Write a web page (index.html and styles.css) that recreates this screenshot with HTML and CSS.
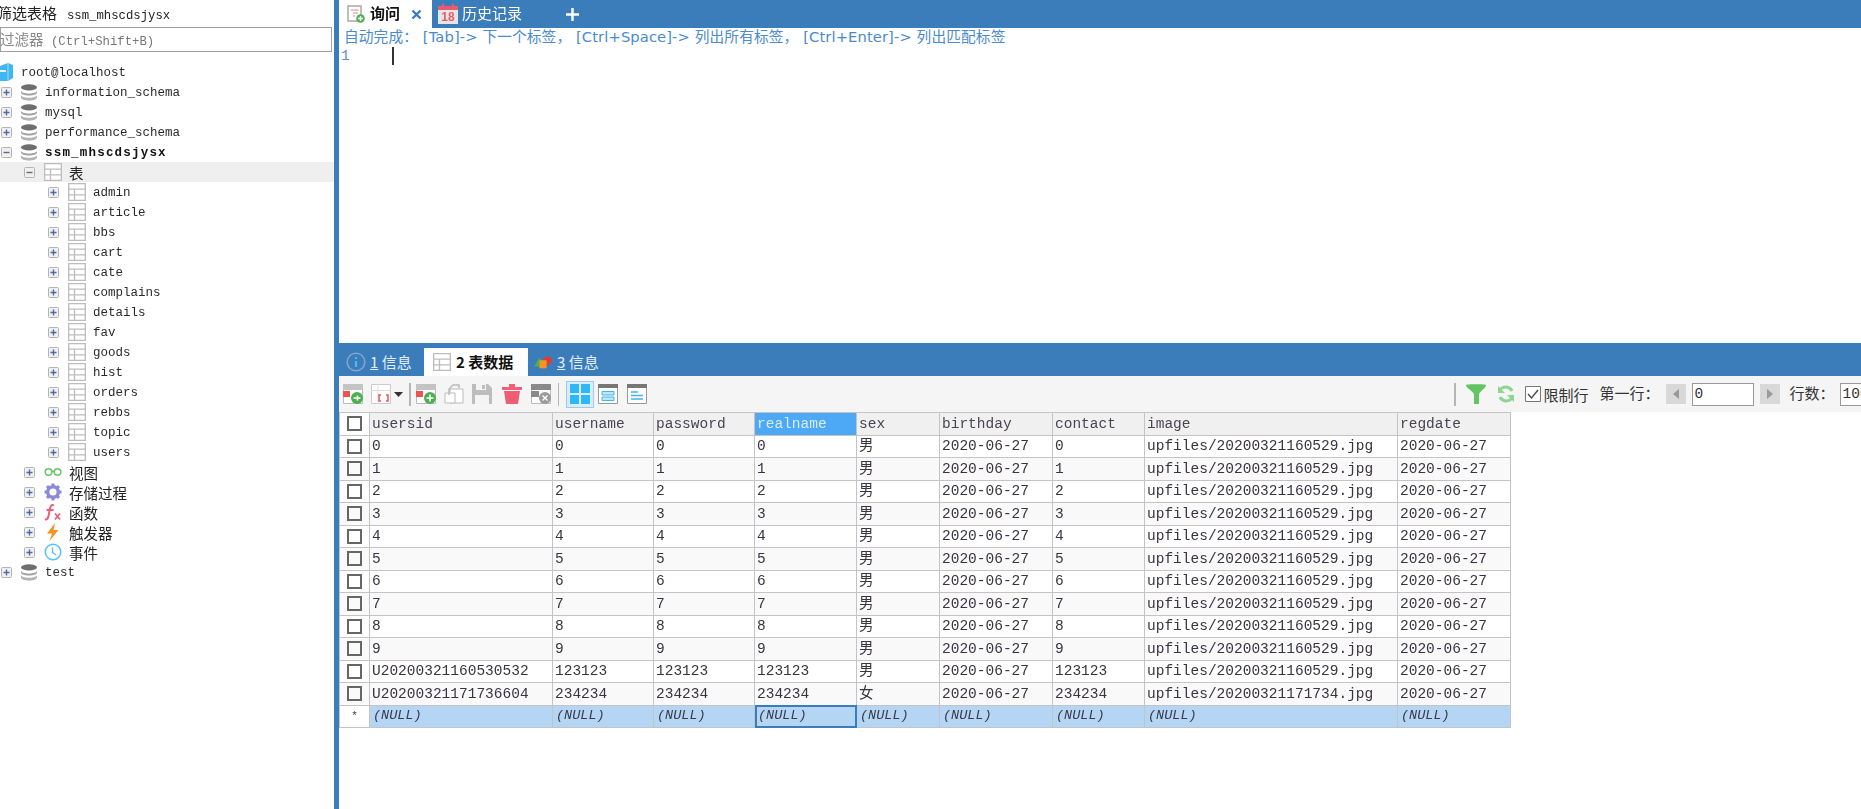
FILE: index.html
```html
<!DOCTYPE html>
<html lang="zh">
<head>
<meta charset="utf-8">
<title>SQLyog</title>
<link rel="stylesheet" href="styles.css">
</head>
<body>
<svg class="defs" width="0" height="0" aria-hidden="true">
  <symbol id="i-plus" viewBox="0 0 11 11"><rect x=".5" y=".5" width="10" height="10" rx="1" fill="#f0f0f0" stroke="#b4b4b4"/><path d="M2.5 5.5h6M5.5 2.5v6" stroke="#4a6aa8" stroke-width="1.4"/></symbol>
  <symbol id="i-minus" viewBox="0 0 11 11"><rect x=".5" y=".5" width="10" height="10" rx="1" fill="#f0f0f0" stroke="#b4b4b4"/><path d="M2.5 5.5h6" stroke="#5a6a88" stroke-width="1.4"/></symbol>
  <symbol id="i-db" viewBox="0 0 16 20" preserveAspectRatio="none"><ellipse cx="8" cy="4" rx="8" ry="3.6" fill="#6e6e6e"/><path d="M0 7.5c0 2 3.600 3.600 8 3.600s8-1.600 8-3.600v2.500c0 2-3.600 3.600-8 3.600s-8-1.600-8-3.600z" fill="#a2a2a2"/><path d="M0 12.500c0 2 3.600 3.600 8 3.600s8-1.600 8-3.600v3.500c0 2-3.600 3.600-8 3.600s-8-1.600-8-3.600z" fill="#b4b4b4"/></symbol>
  <symbol id="i-table" viewBox="0 0 18 18"><path d="M.7.7h16.600v16.600H.7zM.7 6.200h16.600M.7 11.800h16.600M6.500 6.200v11" fill="#fff" stroke="#bdbdbd" stroke-width="1.300"/></symbol>
</svg>

<aside class="sidebar">
  <div class="filter-title"><span class="cjk">筛选表格</span> ssm_mhscdsjysx</div>
  <div class="filter-input"><span class="cjk">过滤器</span> (Ctrl+Shift+B)</div>
  <div class="tree">
    <div class="row root">
      <svg class="icon-root" viewBox="0 0 13 18"><path d="M0 3l8-3 5 2v13l-5 3H0z" fill="#3fb6f2"/><path d="M8 0v18" stroke="#9adcfb" stroke-width="1"/><path d="M0 7h6v2H0z" fill="#e4f5fe"/></svg>
      <span>root@localhost</span>
    </div>
    <div class="row l0"><svg class="exp"><use href="#i-plus"/></svg><svg class="icon-db"><use href="#i-db"/></svg><span>information_schema</span></div>
    <div class="row l0"><svg class="exp"><use href="#i-plus"/></svg><svg class="icon-db"><use href="#i-db"/></svg><span>mysql</span></div>
    <div class="row l0"><svg class="exp"><use href="#i-plus"/></svg><svg class="icon-db"><use href="#i-db"/></svg><span>performance_schema</span></div>
    <div class="row l0 strong"><svg class="exp"><use href="#i-minus"/></svg><svg class="icon-db"><use href="#i-db"/></svg><span>ssm_mhscdsjysx</span></div>
    <div class="row l1 current"><svg class="exp"><use href="#i-minus"/></svg><svg class="icon-t"><use href="#i-table"/></svg><span class="cjk">表</span></div>
    <div class="row l2"><svg class="exp"><use href="#i-plus"/></svg><svg class="icon-t"><use href="#i-table"/></svg><span>admin</span></div>
    <div class="row l2"><svg class="exp"><use href="#i-plus"/></svg><svg class="icon-t"><use href="#i-table"/></svg><span>article</span></div>
    <div class="row l2"><svg class="exp"><use href="#i-plus"/></svg><svg class="icon-t"><use href="#i-table"/></svg><span>bbs</span></div>
    <div class="row l2"><svg class="exp"><use href="#i-plus"/></svg><svg class="icon-t"><use href="#i-table"/></svg><span>cart</span></div>
    <div class="row l2"><svg class="exp"><use href="#i-plus"/></svg><svg class="icon-t"><use href="#i-table"/></svg><span>cate</span></div>
    <div class="row l2"><svg class="exp"><use href="#i-plus"/></svg><svg class="icon-t"><use href="#i-table"/></svg><span>complains</span></div>
    <div class="row l2"><svg class="exp"><use href="#i-plus"/></svg><svg class="icon-t"><use href="#i-table"/></svg><span>details</span></div>
    <div class="row l2"><svg class="exp"><use href="#i-plus"/></svg><svg class="icon-t"><use href="#i-table"/></svg><span>fav</span></div>
    <div class="row l2"><svg class="exp"><use href="#i-plus"/></svg><svg class="icon-t"><use href="#i-table"/></svg><span>goods</span></div>
    <div class="row l2"><svg class="exp"><use href="#i-plus"/></svg><svg class="icon-t"><use href="#i-table"/></svg><span>hist</span></div>
    <div class="row l2"><svg class="exp"><use href="#i-plus"/></svg><svg class="icon-t"><use href="#i-table"/></svg><span>orders</span></div>
    <div class="row l2"><svg class="exp"><use href="#i-plus"/></svg><svg class="icon-t"><use href="#i-table"/></svg><span>rebbs</span></div>
    <div class="row l2"><svg class="exp"><use href="#i-plus"/></svg><svg class="icon-t"><use href="#i-table"/></svg><span>topic</span></div>
    <div class="row l2"><svg class="exp"><use href="#i-plus"/></svg><svg class="icon-t"><use href="#i-table"/></svg><span>users</span></div>
    <div class="row l1"><svg class="exp"><use href="#i-plus"/></svg>
      <svg class="icon-t" viewBox="0 0 18 18"><circle cx="4.500" cy="9" r="3.300" fill="none" stroke="#6cc76c" stroke-width="1.600"/><circle cx="13.500" cy="9" r="3.300" fill="none" stroke="#6cc76c" stroke-width="1.600"/><path d="M7.500 8.300h3" stroke="#6cc76c" stroke-width="1.600"/></svg>
      <span class="cjk">视图</span></div>
    <div class="row l1"><svg class="exp"><use href="#i-plus"/></svg>
      <svg class="icon-t" viewBox="0 0 18 18"><circle cx="9" cy="9" r="5.300" fill="none" stroke="#8a8ad8" stroke-width="3.400"/><path d="M9 .5v3M9 14.500v3M.5 9h3M14.500 9h3M3 3l2.200 2.200M12.800 12.800L15 15M15 3l-2.200 2.200M5.200 12.800L3 15" stroke="#8a8ad8" stroke-width="3"/></svg>
      <span class="cjk">存储过程</span></div>
    <div class="row l1"><svg class="exp"><use href="#i-plus"/></svg>
      <svg class="icon-t" viewBox="0 0 18 18"><path d="M10 2.500C7.500 1 6.500 3 6 5.500L4.500 13c-.5 2.500-1.500 3.800-3.500 3.500M2.500 7h7" fill="none" stroke="#e8607a" stroke-width="2"/><path d="M11 10.500l5 6M16 10.500l-5 6" stroke="#e8607a" stroke-width="1.800"/></svg>
      <span class="cjk">函数</span></div>
    <div class="row l1"><svg class="exp"><use href="#i-plus"/></svg>
      <svg class="icon-t" viewBox="0 0 18 18"><path d="M11 0L3 10.500h5L5.500 18 14.500 7H9.500z" fill="#f7931e"/></svg>
      <span class="cjk">触发器</span></div>
    <div class="row l1"><svg class="exp"><use href="#i-plus"/></svg>
      <svg class="icon-t" viewBox="0 0 18 18"><circle cx="9" cy="9" r="7.800" fill="none" stroke="#56c3f5" stroke-width="1.500"/><path d="M8.500 4.500v5l3.500 2.500" fill="none" stroke="#56c3f5" stroke-width="1.400"/></svg>
      <span class="cjk">事件</span></div>
    <div class="row l0"><svg class="exp"><use href="#i-plus"/></svg><svg class="icon-db"><use href="#i-db"/></svg><span>test</span></div>
  </div>
</aside>

<main class="main">
  <nav class="tabbar top">
    <div class="tab active query">
      <svg class="tab-icon" viewBox="0 0 18 18"><path d="M1 1h13v15H1z" fill="#fff" stroke="#a8a8a8" stroke-width="1.500"/><path d="M3.500 5h8M6 8h5M6 11h2" stroke="#d98a8a"/><circle cx="13.500" cy="13.500" r="4.300" fill="#4caf50"/><path d="M11 13.500h5M13.500 11v5" stroke="#fff" stroke-width="1.400"/></svg>
      <span>询问</span>
      <svg class="close" viewBox="0 0 11 11"><path d="M1.500 1.500l8 8M9.500 1.500l-8 8" stroke="#3b7dba" stroke-width="2.400"/></svg>
    </div>
    <div class="tab history">
      <svg class="tab-icon cal" viewBox="0 0 20 20"><path d="M0 3h20v17H0z" fill="#e6e6e6"/><path d="M0 2h20v4H0z" fill="#e85a6c"/><path d="M4 0h2v4H4zM14 0h2v4h-2z" fill="#e85a6c"/><text x="10" y="17" class="cal-num">18</text></svg>
      <span>历史记录</span>
    </div>
    <svg class="add" viewBox="0 0 13 13"><path d="M6.500 0v13M0 6.500h13" stroke="#fff" stroke-width="2.400"/></svg>
  </nav>

  <section class="editor">
    <div class="hint">自动完成： [Tab]-&gt; 下一个标签， [Ctrl+Space]-&gt; 列出所有标签， [Ctrl+Enter]-&gt; 列出匹配标签</div>
    <div class="code-line"><span class="gutter">1</span><span class="caret"></span></div>
  </section>

  <nav class="tabbar bottom">
    <div class="rtab">
      <svg class="rtab-icon" viewBox="0 0 20 20"><circle cx="10" cy="10" r="8.800" fill="none" stroke="#7da7cc" stroke-width="1.600"/><path d="M10 5v2M10 9v6" stroke="#4fb6ee" stroke-width="2.200"/></svg>
      <span><u>1</u> 信息</span>
    </div>
    <div class="rtab active">
      <svg class="rtab-icon"><use href="#i-table"/></svg>
      <span>2 表数据</span>
    </div>
    <div class="rtab third">
      <svg class="rtab-icon" viewBox="0 0 20 20"><path d="M0 15L6 5l5 10z" fill="#4caf50"/><circle cx="15" cy="8.500" r="4.500" fill="#e53935"/><path d="M6 8h8v9H6z" fill="#f7931e"/></svg>
      <span><u>3</u> 信息</span>
    </div>
  </nav>

  <div class="toolbar">
    <div class="tools-left">
      <svg class="tool" viewBox="0 0 20 20"><path d="M.5.5h19v19H.5z" fill="#fff" stroke="#bbb"/><path d="M0 7h7v6H0z" fill="#ef5350"/><path d="M0 0h20v6H0z" fill="#c4c4c4"/><circle cx="14" cy="14" r="6" fill="#4caf50"/><path d="M10.500 14h7M14.500 11.500v5" stroke="#fff" stroke-width="1.600"/></svg>
      <svg class="tool gap6" viewBox="0 0 20 20"><path d="M.5.500h19v19H.5z" fill="#fff" stroke="#ccc"/><path d="M0 6.500h20M7 0v20" stroke="#ddd"/><path d="M11 11H9v6h2M16 11h2v6h-2" fill="none" stroke="#ef5350" stroke-width="1.500" transform="translate(-1 0)"/></svg>
      <svg class="caret-down" viewBox="0 0 9 5"><path d="M0 0h9L4.500 5z" fill="#333"/></svg>
      <span class="tsep first"></span>
      <svg class="tool" viewBox="0 0 20 20"><path d="M.5.500h19v19H.5z" fill="#fff" stroke="#bbb"/><path d="M0 7h7v6H0z" fill="#ef5350"/><path d="M0 0h20v6H0z" fill="#c4c4c4"/><circle cx="14" cy="14" r="6" fill="#4caf50"/><path d="M10.500 14h7M14 10.500v7" stroke="#fff" stroke-width="1.600"/></svg>
      <svg class="tool gap8" viewBox="0 0 20 20"><path d="M6 5h13v14H6z" fill="#fff" stroke="#bbb"/><path d="M1 9h10v10H1z" fill="#fff" stroke="#bbb"/><path d="M5 11V5l4-4h6v3" fill="none" stroke="#bbb" stroke-width="1.500"/></svg>
      <svg class="tool gap8" viewBox="0 0 20 20"><path d="M0 0h16l4 4v16H0z" fill="#bdbdbd"/><path d="M4 0h10v6H4zM3 11h14v9H3z" fill="#f4f4f4"/><path d="M10 1h3v4h-3z" fill="#bdbdbd"/></svg>
      <svg class="tool gap10" viewBox="0 0 20 20"><path d="M0 3h20v3H0zM7 0h6v3H7zM2 7h16l-2 13H4z" fill="#ee5f75"/></svg>
      <svg class="tool gap9" viewBox="0 0 20 20"><path d="M.5.500h19v19H.5z" fill="#fff" stroke="#bbb"/><path d="M0 0h20v6H0zM0 7h8v6H0z" fill="#8a8a8a"/><circle cx="14" cy="14" r="6" fill="#9a9a9a"/><path d="M11.500 11.500l5 5M16.500 11.500l-5 5" stroke="#fff" stroke-width="1.400"/></svg>
      <span class="tsep second"></span>
      <span class="view-on"><svg class="tool" viewBox="0 0 20 20"><path d="M0 0h9v9H0zM11 0h9v9h-9zM0 11h9v9H0zM11 11h9v9h-9z" fill="#2eb8f6"/></svg></span>
      <svg class="tool gap4" viewBox="0 0 20 20"><path d="M.5.500h19v19H.5z" fill="#fff" stroke="#999"/><path d="M0 0h20v4H0z" fill="#777"/><path d="M4 7.500h12v3.500H4zM4 13h12v3.500H4z" fill="#bfe6fb" stroke="#45b4ee"/></svg>
      <svg class="tool gap9" viewBox="0 0 20 20"><path d="M.5.500h19v19H.5z" fill="#fff" stroke="#999"/><path d="M0 0h20v4H0z" fill="#777"/><path d="M4 8h7M4 11.500h12M4 15h12" stroke="#45b4ee" stroke-width="1.300"/></svg>
    </div>
    <div class="tools-right">
      <span class="tsep"></span>
      <svg class="tool filter" viewBox="0 0 20 20"><path d="M0 1c0-1 20-1 20 0 0 3-6 6-7 9v10H8V10C7 7 0 4 0 1z" fill="#62c462"/></svg>
      <svg class="tool refresh" viewBox="0 0 18 18"><path d="M15 6A7 7 0 0 0 3 5M3 12a7 7 0 0 0 12 1" fill="none" stroke="#8fd48f" stroke-width="3"/><path d="M1 1v7h7zM17 17v-7h-7z" fill="#8fd48f"/></svg>
      <span class="check"><svg viewBox="0 0 16 16"><path d="M.5.500h15v15H.5z" fill="#fff" stroke="#777"/><path d="M3 8l3.500 4L13 4" fill="none" stroke="#444" stroke-width="1.300"/></svg></span>
      <span class="tlabel limit">限制行</span>
      <span class="tlabel first-row">第一行：</span>
      <span class="pager"><svg viewBox="0 0 8 12"><path d="M7 1v10L1 6z" fill="#999"/></svg></span>
      <span class="num-input wide">0</span>
      <span class="pager"><svg viewBox="0 0 8 12"><path d="M1 1v10l6-5z" fill="#999"/></svg></span>
      <span class="tlabel rows">行数：</span>
      <span class="num-input">1000</span>
    </div>
  </div>

  <div class="grid-wrap">
    <table class="grid">
      <colgroup><col class="c0"><col class="c1"><col class="c2"><col class="c3"><col class="c4"><col class="c5"><col class="c6"><col class="c7"><col class="c8"><col class="c9"></colgroup>
      <thead><tr><th class="mark"><span class="box"></span></th><th>usersid</th><th>username</th><th>password</th><th class="sel-col">realname</th><th>sex</th><th>birthday</th><th>contact</th><th>image</th><th>regdate</th></tr></thead>
      <tbody>
        <tr><td class="mark"><span class="box"></span></td><td>0</td><td>0</td><td>0</td><td>0</td><td>男</td><td>2020-06-27</td><td>0</td><td>upfiles/20200321160529.jpg</td><td>2020-06-27</td></tr>
        <tr><td class="mark"><span class="box"></span></td><td>1</td><td>1</td><td>1</td><td>1</td><td>男</td><td>2020-06-27</td><td>1</td><td>upfiles/20200321160529.jpg</td><td>2020-06-27</td></tr>
        <tr><td class="mark"><span class="box"></span></td><td>2</td><td>2</td><td>2</td><td>2</td><td>男</td><td>2020-06-27</td><td>2</td><td>upfiles/20200321160529.jpg</td><td>2020-06-27</td></tr>
        <tr><td class="mark"><span class="box"></span></td><td>3</td><td>3</td><td>3</td><td>3</td><td>男</td><td>2020-06-27</td><td>3</td><td>upfiles/20200321160529.jpg</td><td>2020-06-27</td></tr>
        <tr><td class="mark"><span class="box"></span></td><td>4</td><td>4</td><td>4</td><td>4</td><td>男</td><td>2020-06-27</td><td>4</td><td>upfiles/20200321160529.jpg</td><td>2020-06-27</td></tr>
        <tr><td class="mark"><span class="box"></span></td><td>5</td><td>5</td><td>5</td><td>5</td><td>男</td><td>2020-06-27</td><td>5</td><td>upfiles/20200321160529.jpg</td><td>2020-06-27</td></tr>
        <tr><td class="mark"><span class="box"></span></td><td>6</td><td>6</td><td>6</td><td>6</td><td>男</td><td>2020-06-27</td><td>6</td><td>upfiles/20200321160529.jpg</td><td>2020-06-27</td></tr>
        <tr><td class="mark"><span class="box"></span></td><td>7</td><td>7</td><td>7</td><td>7</td><td>男</td><td>2020-06-27</td><td>7</td><td>upfiles/20200321160529.jpg</td><td>2020-06-27</td></tr>
        <tr><td class="mark"><span class="box"></span></td><td>8</td><td>8</td><td>8</td><td>8</td><td>男</td><td>2020-06-27</td><td>8</td><td>upfiles/20200321160529.jpg</td><td>2020-06-27</td></tr>
        <tr><td class="mark"><span class="box"></span></td><td>9</td><td>9</td><td>9</td><td>9</td><td>男</td><td>2020-06-27</td><td>9</td><td>upfiles/20200321160529.jpg</td><td>2020-06-27</td></tr>
        <tr><td class="mark"><span class="box"></span></td><td>U20200321160530532</td><td>123123</td><td>123123</td><td>123123</td><td>男</td><td>2020-06-27</td><td>123123</td><td>upfiles/20200321160529.jpg</td><td>2020-06-27</td></tr>
        <tr><td class="mark"><span class="box"></span></td><td>U20200321171736604</td><td>234234</td><td>234234</td><td>234234</td><td>女</td><td>2020-06-27</td><td>234234</td><td>upfiles/20200321171734.jpg</td><td>2020-06-27</td></tr>
        <tr class="new-row"><td class="mark star">*</td><td>(NULL)</td><td>(NULL)</td><td>(NULL)</td><td class="focus">(NULL)</td><td>(NULL)</td><td>(NULL)</td><td>(NULL)</td><td>(NULL)</td><td>(NULL)</td></tr>
      </tbody>
    </table>
  </div>
</main>
</body>
</html>
```

FILE: styles.css
```css
* { box-sizing: border-box; }
html, body { margin: 0; height: 100%; }
body {
  display: flex;
  width: 1861px;
  height: 809px;
  overflow: hidden;
  background: #fff;
  color: #222;
  font-family: "Liberation Mono", "Noto Sans CJK SC", monospace;
  filter: blur(.35px);
}
.defs { position: absolute; }
.cjk { font-family: "Noto Sans CJK SC", sans-serif; }

/* Sidebar */
.sidebar {
  flex: 0 0 334px;
  width: 334px;
  overflow: hidden;
  font-size: 12.3px;
}
.filter-title {
  height: 27px;
  line-height: 26px;
  white-space: nowrap;
  color: #222;
}
.filter-title .cjk { font-size: 15px; margin: 0 2.500px 0 -3px; }
.filter-input {
  height: 25px;
  width: 332px;
  margin-bottom: 10px;
  border: 1.500px solid #a0a0a0;
  color: #777;
  line-height: 22px;
  white-space: nowrap;
}
.filter-input .cjk { font-size: 14.5px; color: #888; margin-left: -1px; }
.row {
  display: flex;
  align-items: center;
  height: 20px;
  font-size: 12.5px;
  white-space: nowrap;
  color: #2a2a2a;
}
.row span:not(.cjk) { padding-top: 2px; }
.row .cjk { font-size: 14.5px; color: #222; }
.root { gap: 8px; }
.l0 { padding-left: 1px; }
.l1 { padding-left: 24px; }
.l2 { padding-left: 48px; }
.strong { font-weight: 700; color: #111; letter-spacing: 1.200px; }
.current { background: #efefef; }
.exp { flex: none; width: 11px; height: 11px; }
.icon-root { flex: none; width: 13px; height: 18px; }
.icon-db { flex: none; width: 16px; height: 17px; margin: 0 8px 0 9px; }
.icon-t { flex: none; width: 18px; height: 18px; margin: 0 7px 0 9px; }

/* Main */
.main {
  flex: 1 1 0;
  min-width: 0;
  display: flex;
  flex-direction: column;
  border-left: 5px solid #3b7dba;
}
.tabbar {
  flex: none;
  display: flex;
  background: #3b7dba;
  color: #fff;
  font-family: "Noto Sans CJK SC", sans-serif;
  font-size: 15px;
}
.top { height: 28px; align-items: stretch; }
.tab { display: flex; align-items: center; }
.tab > span { margin-top: -3px; }
.tab.active {
  width: 93px;
  padding-left: 8px;
  background: #fff;
  color: #111;
  font-weight: 700;
}
.tab-icon { flex: none; width: 18px; height: 18px; margin-right: 5px; }
.cal { width: 20px; height: 20px; margin-right: 4px; }
.cal-num { font: 700 12px "Liberation Sans", sans-serif; fill: #e85a6c; text-anchor: middle; }
.close { width: 11px; height: 11px; margin-left: 11px; }
.history { padding-left: 6px; }
.add { width: 13px; height: 13px; margin: 8px 0 0 44px; }
.editor { flex: 1 1 0; min-height: 0; background: #fff; }
.hint {
  height: 19px;
  padding-left: 5px;
  font: 14.700px/18px "DejaVu Sans", "Noto Sans CJK SC", sans-serif;
  letter-spacing: .12px;
  color: #4a8ad0;
  white-space: nowrap;
}
.code-line { display: flex; align-items: flex-start; }
.gutter {
  width: 53px;
  padding-left: 2px;
  font-size: 14.5px;
  line-height: 18px;
  color: #5a8fc8;
}
.caret { width: 1.500px; height: 18px; background: #333; }

/* Result tabs */
.bottom {
  height: 33px;
  align-items: flex-end;
}
.rtab {
  display: flex;
  align-items: center;
  height: 28px;
  color: #e4eefa;
}
.rtab > span { margin-top: -2px; }
.rtab:first-child { width: 85px; padding-left: 7px; }
.rtab.active {
  width: 104px;
  padding-left: 9px;
  background: #fff;
  color: #111;
  font-weight: 700;
}
.third { padding-left: 6px; }
.rtab-icon { flex: none; width: 18px; height: 18px; margin-right: 5px; }
.rtab:first-child .rtab-icon { width: 20px; height: 20px; margin-right: 4px; }

/* Toolbar */
.toolbar {
  flex: none;
  display: flex;
  align-items: center;
  height: 36px;
  background: #f5f5f5;
  overflow: hidden;
}
.tools-left {
  flex: 0 0 1115px;
  display: flex;
  align-items: center;
  padding-left: 4px;
}
.tools-right {
  flex: none;
  display: flex;
  align-items: center;
  font-family: "Noto Sans CJK SC", sans-serif;
  font-size: 15px;
  color: #333;
}
.tool { flex: none; width: 20px; height: 20px; }
.gap4 { margin-left: 4px; }
.gap6 { margin-left: 8px; }
.gap8 { margin-left: 8px; }
.gap9 { margin-left: 9px; }
.gap10 { margin-left: 10px; }
.caret-down { flex: none; width: 9px; height: 5px; margin-left: 3px; }
.tsep { flex: none; width: 1.500px; height: 23px; background: #b5b5b5; }
.tsep.first { margin: 0 5px 0 6px; }
.tsep.second { margin: 0 7px; }
.view-on {
  display: flex;
  align-items: center;
  justify-content: center;
  width: 28px;
  height: 27px;
  background: #d9ecfb;
  border: 1px solid #9ccbee;
}
.filter { margin-left: 10px; }
.refresh { width: 18px; height: 18px; margin-left: 11px; }
.check { display: flex; width: 16px; height: 16px; margin-left: 10px; }
.tlabel { white-space: nowrap; }
.limit { margin-left: 3px; }
.first-row { margin: -3px 0 0 11px; }
.rows { margin: -3px 0 0 10px; }
.pager {
  display: flex;
  align-items: center;
  justify-content: center;
  width: 20px;
  height: 20px;
  background: #d8d8d8;
}
.pager svg { width: 8px; height: 12px; }
.first-row + .pager { margin-left: 6px; }
.num-input {
  display: block;
  flex: none;
  width: 60px;
  height: 23px;
  padding-left: 2px;
  border: 1px solid #999;
  background: #fff;
  font: 14.500px/21px "Liberation Mono", monospace;
}
.rows + .num-input { margin-left: 5px; }
.wide { width: 62px; margin: 0 6px; }

/* Data grid */
.grid-wrap { flex: 0 0 397px; }
.grid {
  width: 1171px;
  table-layout: fixed;
  border-collapse: collapse;
  font-size: 14.5px;
  color: #3a3340;
}
.c0 { width: 30px; }
.c1 { width: 183px; }
.c2, .c3 { width: 101px; }
.c4 { width: 102px; }
.c5 { width: 83px; }
.c6 { width: 113px; }
.c7 { width: 92px; }
.c8 { width: 253px; }
.c9 { width: 113px; }
th, td {
  height: 22.500px;
  padding: 0 0 0 2px;
  border: 1.500px solid #c4c4c4;
  overflow: hidden;
  white-space: nowrap;
  line-height: 18px;
  font-weight: 400;
  text-align: left;
}
th { background: #f0f0f0; color: #4a4450; }
th.sel-col { background: #4da8f5; color: #d8ecff; }
tbody tr:nth-child(even) td { background: #f9f9f9; }
.mark { padding: 0; text-align: center; background: #fff; }
tbody tr:nth-child(even) td.mark { background: #fafafa; }
.box {
  display: inline-block;
  width: 15px;
  height: 15px;
  border: 2.500px solid #666;
  vertical-align: middle;
}
.new-row td { background: #b5d5f5; font-size: 13.5px; font-style: italic; padding-left: 3px; color: #3a3a4a; }
.new-row td.mark { background: #fff; padding: 0; font-style: normal; font-size: 11px; }
.new-row td.focus { outline: 2px solid #3b7dba; outline-offset: -2px; }
```
